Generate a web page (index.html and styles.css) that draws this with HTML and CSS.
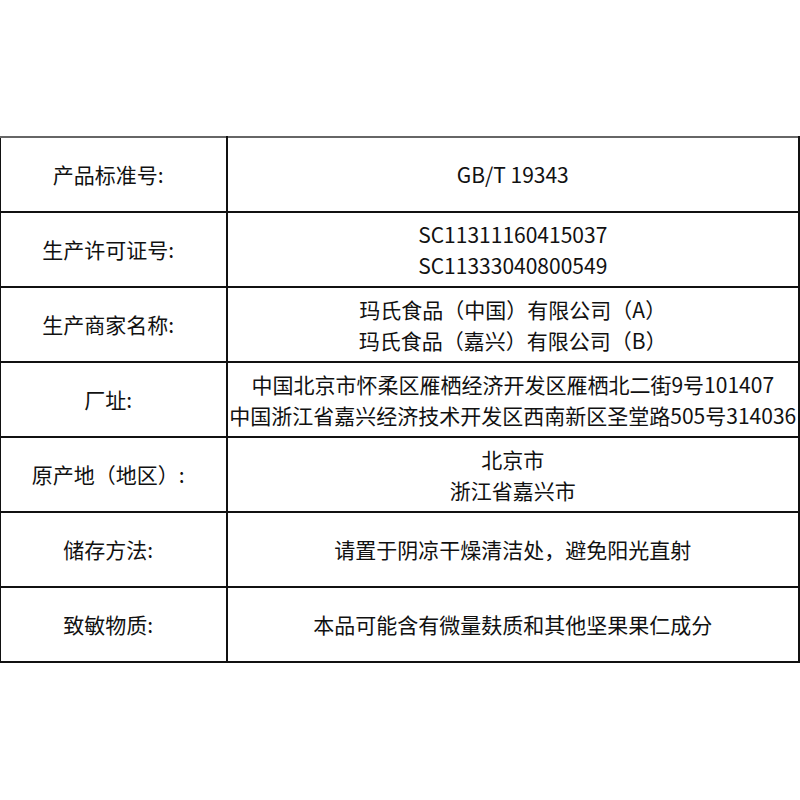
FILE: index.html
```html
<!DOCTYPE html>
<html lang="zh-CN">
<head>
<meta charset="utf-8">
<link rel="stylesheet" href="styles.css">
</head>
<body>
<div class="page">
  <table class="spec">
    <colgroup><col class="c-label"><col class="c-value"></colgroup>
    <tr><td class="label">产品标准号:</td><td class="value">GB/T 19343</td></tr>
    <tr><td class="label">生产许可证号:</td><td class="value">SC11311160415037<br>SC11333040800549</td></tr>
    <tr><td class="label">生产商家名称:</td><td class="value">玛氏食品（中国）有限公司（A）<br>玛氏食品（嘉兴）有限公司（B）</td></tr>
    <tr><td class="label">厂址:</td><td class="value">中国北京市怀柔区雁栖经济开发区雁栖北二街9号101407<br>中国浙江省嘉兴经济技术开发区西南新区圣堂路505号314036</td></tr>
    <tr><td class="label">原产地（地区）:</td><td class="value">北京市<br>浙江省嘉兴市</td></tr>
    <tr><td class="label">储存方法:</td><td class="value">请置于阴凉干燥清洁处，避免阳光直射</td></tr>
    <tr><td class="label">致敏物质:</td><td class="value">本品可能含有微量麸质和其他坚果果仁成分</td></tr>
  </table>
</div>
</body>
</html>
```
FILE: styles.css
```css
html, body {
  margin: 0;
  padding: 0;
  background: #fff;
}
.page {
  width: 800px;
  height: 800px;
  padding-top: 136px;
  box-sizing: border-box;
}
.spec {
  width: 800px;
  border-collapse: collapse;
  table-layout: fixed;
  font-family: "Noto Sans CJK SC", "Noto Sans", sans-serif;
  font-size: 21px;
  color: #111;
}
.c-label { width: 226px; }
.spec td {
  border: 2px solid #111;
  height: 73px;
  padding: 0;
  text-align: center;
  vertical-align: middle;
  line-height: 31px;
  white-space: nowrap;
}
.spec tr:first-child td {
  border-top-color: #666;
}
.spec td.label {
  border-left-width: 1px;
  padding-right: 10px;
}
```
